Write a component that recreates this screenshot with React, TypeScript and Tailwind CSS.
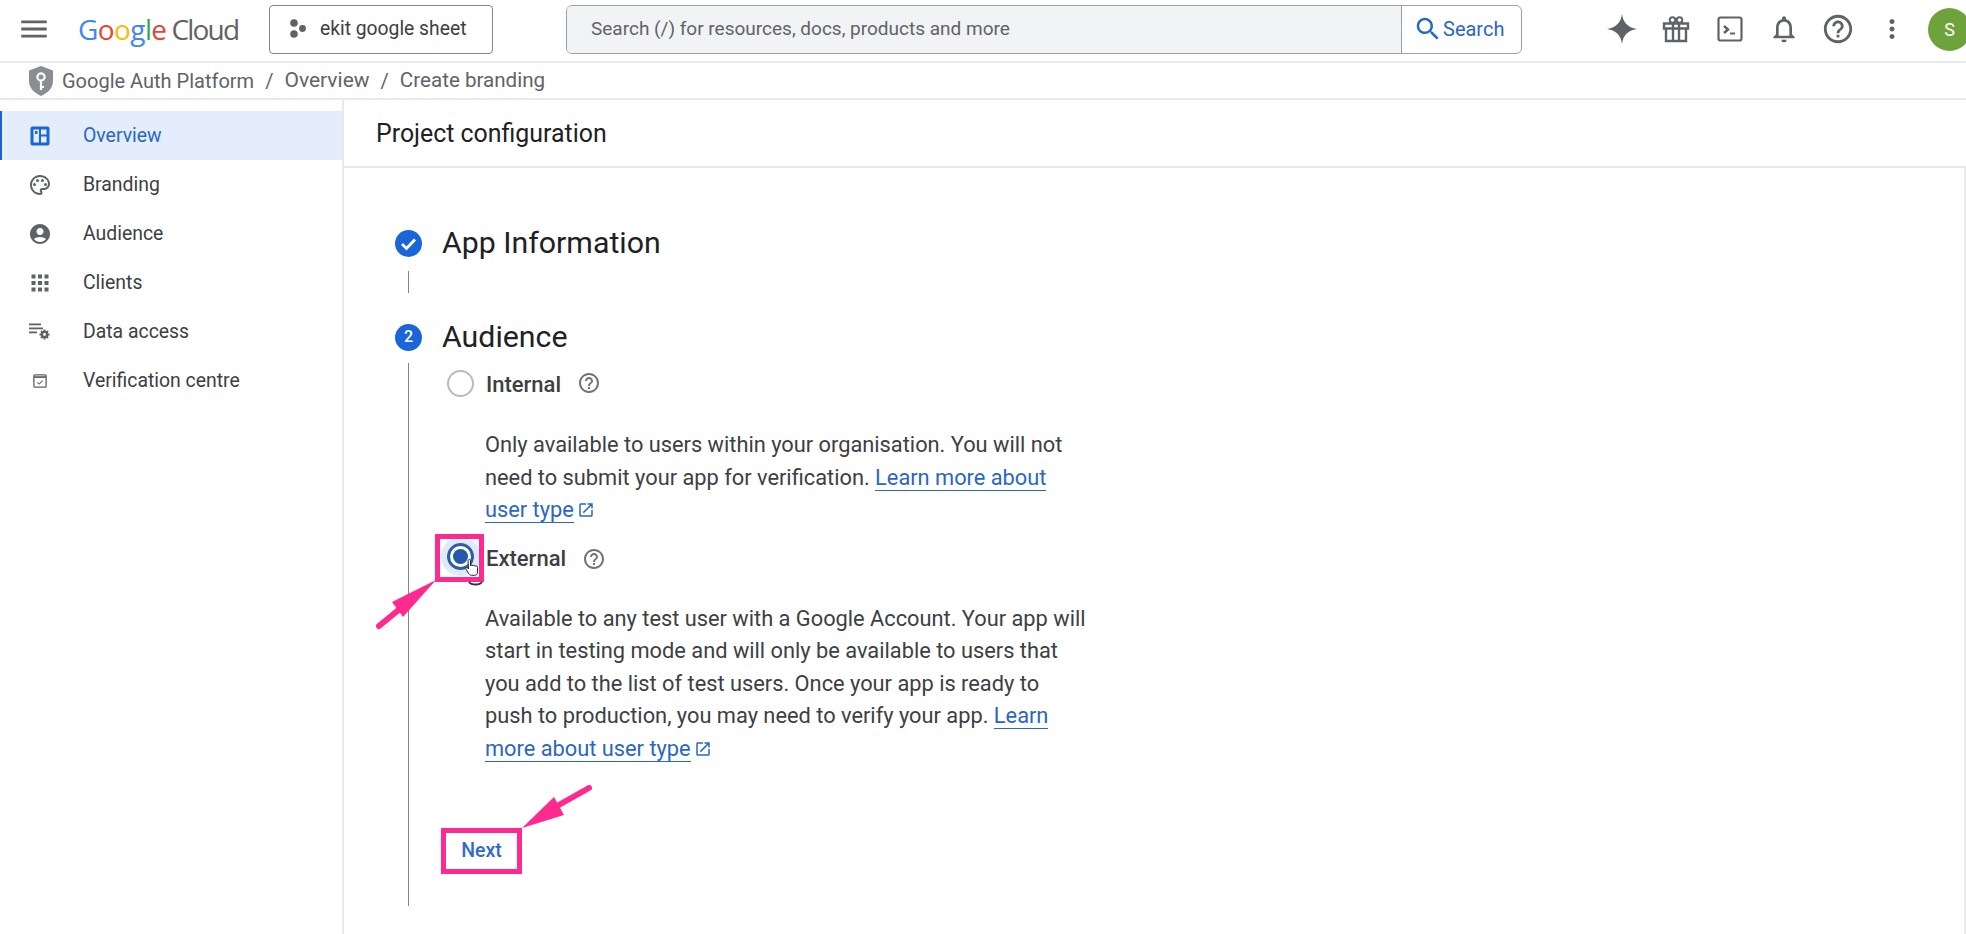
import React from "react";

const P = ({ d, className }: { d: string; className?: string }) => (
  <svg viewBox="0 0 24 24" fill="currentColor" className={className}>
    <path d={d} />
  </svg>
);

const HELP =
  "M11 18h2v-2h-2v2zm1-16C6.48 2 2 6.48 2 12s4.48 10 10 10 10-4.48 10-10S17.52 2 12 2zm0 18c-4.41 0-8-3.59-8-8s3.59-8 8-8 8 3.59 8 8-3.59 8-8 8zm0-14c-2.21 0-4 1.79-4 4h2c0-1.1.9-2 2-2s2 .9 2 2c0 2-3 1.75-3 5h2c0-2.25 3-2.5 3-5 0-2.21-1.79-4-4-4z";
const OPEN =
  "M19 19H5V5h7V3H5c-1.11 0-2 .9-2 2v14c0 1.1.89 2 2 2h14c1.1 0 2-.9 2-2v-7h-2v7zM14 3v2h3.59l-9.83 9.83 1.41 1.41L19 6.41V10h2V3h-7z";

const TopIcon = ({ children }: { children: React.ReactNode }) => (
  <div className="w-[54px] h-[54px] shrink-0 flex items-center justify-center text-[#5f6368]">{children}</div>
);

const OverviewIcon = () => (
  <svg viewBox="0 0 20 20" className="w-5 h-5">
    <rect x="0.5" y="0.5" width="19" height="19" rx="2" fill="#1b66d2" />
    <rect x="3.5" y="3.5" width="5.5" height="13" fill="#e3edfc" />
    <rect x="11" y="3.5" width="5.5" height="5" fill="#e3edfc" />
    <rect x="11" y="10.5" width="5.5" height="6" fill="#e3edfc" />
    <rect x="5" y="5" width="2.5" height="3" fill="#1b66d2" />
  </svg>
);

const PaletteIcon = () => (
  <svg viewBox="0 0 24 24" fill="currentColor" className="w-6 h-6">
    <path d="M12 22C6.49 22 2 17.51 2 12S6.49 2 12 2s10 4.04 10 9c0 3.31-2.69 6-6 6h-1.77c-.28 0-.5.22-.5.5 0 .12.05.23.13.33.41.47.64 1.06.64 1.67A2.5 2.5 0 0 1 12 22zm0-18c-4.41 0-8 3.59-8 8s3.59 8 8 8c.28 0 .5-.22.5-.5a.54.54 0 0 0-.14-.35c-.41-.46-.63-1.05-.63-1.65a2.5 2.5 0 0 1 2.5-2.5H16c2.21 0 4-1.79 4-4 0-3.86-3.59-7-8-7z" />
    <circle cx="6.5" cy="11.5" r="1.5" />
    <circle cx="9.5" cy="7.5" r="1.5" />
    <circle cx="14.5" cy="7.5" r="1.5" />
    <circle cx="17.5" cy="11.5" r="1.5" />
  </svg>
);

const GridIcon = () => (
  <svg viewBox="0 0 18 18" fill="currentColor" className="w-[18px] h-[18px]">
    {[0, 6.5, 13].map((y) =>
      [0, 6.5, 13].map((x) => <rect key={`${x}-${y}`} x={x + 0.5} y={y + 0.5} width="4" height="4" />)
    )}
  </svg>
);

const DataIcon = () => (
  <svg viewBox="0 0 22 18" fill="currentColor" className="w-[22px] h-[18px]">
    <rect x="0" y="0.5" width="12" height="1.8" />
    <rect x="0" y="4.5" width="14" height="1.8" />
    <rect x="0" y="8.5" width="8" height="1.8" />
    <circle cx="15.5" cy="11.5" r="2.6" fill="none" stroke="currentColor" strokeWidth="2.4" />
    <path
      d="M15.5 6.5v2.500M15.500 14v2.500M10.500 11.500h2.500M18 11.500h2.500M12 8l1.800 1.800M17.200 13.200l1.800 1.800M19 8l-1.800 1.800M13.800 13.200l-1.800 1.800"
      stroke="currentColor"
      strokeWidth="2"
    />
  </svg>
);

const VerifyIcon = () => (
  <svg viewBox="0 0 16 16" fill="none" stroke="currentColor" className="w-[14px] h-[14px]">
    <rect x="1" y="1" width="14" height="14" rx="1" strokeWidth="1.5" />
    <path d="M1 3.5h14" strokeWidth="2" />
    <path d="M5 9.5l2 2 4-4" strokeWidth="1.2" />
  </svg>
);

const Side = ({ icon, label, active }: { icon: React.ReactNode; label: string; active?: boolean }) => (
  <div
    className={`h-[49px] flex items-center text-[19.4px] ${
      active ? "bg-[#e3edfc] text-[#2a66c4] border-l-2 border-[#1b62cc]" : "text-[#3c4043] pl-[2px]"
    }`}
  >
    <div className={`w-[38px] ml-[19px] flex justify-center ${active ? "" : "text-[#5f6368]"}`}>{icon}</div>
    <span className="ml-[24px]">{label}</span>
  </div>
);

const Link = ({ children }: { children: React.ReactNode }) => (
  <span className="text-[#2a66c4] border-b border-[#2a66c4]">{children}</span>
);

const OpenIcon = () => <P d={OPEN} className="inline-block w-[18px] h-[18px] ml-[3px] align-[-2px] text-[#2a66c4]" />;

export default function App() {
  return (
    <div className="relative w-[1966px] h-[934px] overflow-hidden bg-white font-['Roboto','Liberation_Sans',sans-serif] text-[#202124]">
      {/* Top bar */}
      <header className="h-[63px] pb-[3px] flex items-center border-b-2 border-[#e8e9eb]">
        <P
          d="M3 18h18v-2H3v2zm0-5h18v-2H3v2zm0-7v2h18V6H3z"
          className="w-[34px] h-[34px] shrink-0 ml-[17px] text-[#5f6368]"
        />
        <div className="ml-[27px] w-[161px] shrink-0 flex items-baseline text-[28px] font-['Open_Sans',sans-serif] leading-none">
          <span className="tracking-[-0.6px]">
            <span className="text-[#4285f4]">G</span>
            <span className="text-[#ea4335]">o</span>
            <span className="text-[#fbbc05]">o</span>
            <span className="text-[#4285f4]">g</span>
            <span className="text-[#34a853]">l</span>
            <span className="text-[#ea4335]">e</span>
          </span>
          <span className="ml-[5px] text-[#5f6368] tracking-[-1.8px]">Cloud</span>
        </div>
        <div className="ml-[30px] w-[224px] shrink-0 h-[49px] rounded border border-[#80868b] flex items-center pl-[19px] text-[19.3px] text-[#3c4043]">
          <svg viewBox="0 0 18 20" fill="#5f6368" className="w-[18px] h-[20px]">
            <circle cx="5" cy="4" r="3.8" />
            <circle cx="5" cy="15" r="3.8" />
            <circle cx="13.5" cy="9.5" r="3.4" />
          </svg>
          <span className="ml-[13px]">ekit google sheet</span>
        </div>
        <div className="ml-[73px] w-[956px] shrink-0 h-[49px] rounded-md border border-[#9aa0a6] flex overflow-hidden">
          <div className="w-[835px] bg-[#f1f3f4] border-r border-[#9aa0a6] flex items-center pl-[24px] text-[19px] text-[#5f6368]">
            Search (/) for resources, docs, products and more
          </div>
          <div className="flex-1 flex items-center pl-[14px] text-[#2a66c4] text-[20px]">
            <P
              d="M15.5 14h-.79l-.28-.27C15.41 12.59 16 11.11 16 9.5 16 5.91 13.09 3 9.5 3S3 5.91 3 9.5 5.91 16 9.5 16c1.61 0 3.09-.59 4.23-1.57l.27.28v.79l5 4.99L20.49 19l-4.99-5zm-6 0C7.01 14 5 11.99 5 9.5S7.01 5 9.5 5 14 7.01 14 9.5 11.99 14 9.5 14z"
              className="w-[30px] h-[30px] -ml-[3px]"
            />
            <span>Search</span>
          </div>
        </div>
        <div className="ml-[73px] shrink-0 flex items-center">
          <TopIcon>
            <svg viewBox="0 0 32 32" fill="currentColor" className="w-[32px] h-[32px]">
              <path d="M16 1c1.2 8.6 5.4 13.4 15 15-9.6 1.6-13.8 6.4-15 15-1.2-8.6-5.4-13.4-15-15C10.600 14.400 14.800 9.600 16 1z" />
            </svg>
          </TopIcon>
          <TopIcon>
            <svg viewBox="0 0 28 28" fill="none" stroke="currentColor" strokeWidth="2.400" className="w-[28px] h-[28px]">
              <path d="M2 8.500h24v5H2zM4 13.500h20V26H4zM11 8.500V26M17 8.500V26" />
              <circle cx="10.500" cy="5" r="2.800" strokeWidth="2" />
              <circle cx="17.500" cy="5" r="2.800" strokeWidth="2" />
            </svg>
          </TopIcon>
          <TopIcon>
            <svg viewBox="0 0 26 26" fill="none" stroke="currentColor" strokeWidth="2.200" className="w-[26px] h-[26px]">
              <rect x="1.500" y="1.500" width="23" height="23" rx="2" />
              <path d="M7 10l4 3.500-4 3.500" strokeWidth="2.400" />
              <path d="M13 17.500h5" strokeWidth="2" />
            </svg>
          </TopIcon>
          <TopIcon>
            <P
              d="M12 22c1.100 0 2-.9 2-2h-4c0 1.100.9 2 2 2zm6-6v-5c0-3.070-1.630-5.640-4.500-6.320V4c0-.83-.67-1.500-1.500-1.500s-1.500.67-1.500 1.500v.68C7.640 5.360 6 7.920 6 11v5l-2 2v1h16v-1l-2-2zm-2 1H8v-6c0-2.480 1.510-4.500 4-4.500s4 2.020 4 4.500v6z"
              className="w-[32px] h-[32px]"
            />
          </TopIcon>
          <TopIcon>
            <P d={HELP} className="w-[34px] h-[34px]" />
          </TopIcon>
          <TopIcon>
            <P
              d="M12 8c1.100 0 2-.9 2-2s-.9-2-2-2-2 .9-2 2 .9 2 2 2zm0 2c-1.100 0-2 .9-2 2s.9 2 2 2 2-.9 2-2-.9-2-2-2zm0 6c-1.100 0-2 .9-2 2s.9 2 2 2 2-.9 2-2-.9-2-2-2z"
              className="w-[30px] h-[30px]"
            />
          </TopIcon>
          <div className="ml-[9px] w-[43px] h-[43px] rounded-full bg-[#6ea33c] text-white flex items-center justify-center text-[18px] shrink-0">
            S
          </div>
        </div>
      </header>

      {/* Breadcrumb */}
      <div className="h-[37px] flex items-center border-b-2 border-[#e8e9eb] pl-[28px] text-[20px] text-[#5f6368]">
        <svg viewBox="0 0 26 30" className="w-[26px] h-[30px] shrink-0">
          <path d="M13 0l12 4.500v10c0 7.500-5 12.500-12 15.500C6 27 1 22 1 14.500v-10z" fill="#8a8d91" />
          <circle cx="13" cy="11" r="3.600" fill="none" stroke="#fff" strokeWidth="2.200" />
          <path d="M13 14.500V24M13 21h3" stroke="#fff" strokeWidth="2.200" fill="none" />
        </svg>
        <span className="ml-[8px]">Google Auth Platform</span>
        <span className="mx-[11px]">/</span>
        <span className="text-[21px]">Overview</span>
        <span className="mx-[11px]">/</span>
        <span className="text-[20.6px]">Create branding</span>
      </div>

      <div className="flex h-[834px]">
        {/* Sidebar */}
        <aside className="w-[344px] shrink-0 border-r-2 border-[#e8e9eb] pt-[11px]">
          <Side active icon={<OverviewIcon />} label="Overview" />
          <Side icon={<PaletteIcon />} label="Branding" />
          <Side
            icon={
              <P
                d="M12 2C6.480 2 2 6.480 2 12s4.480 10 10 10 10-4.480 10-10S17.520 2 12 2zm0 4c1.930 0 3.500 1.570 3.500 3.500S13.930 13 12 13s-3.500-1.570-3.500-3.500S10.070 6 12 6zm0 14c-2.030 0-4.430-.82-6.140-2.880a9.947 9.947 0 0 1 12.280 0C16.430 19.180 14.030 20 12 20z"
                className="w-6 h-6"
              />
            }
            label="Audience"
          />
          <Side icon={<GridIcon />} label="Clients" />
          <Side icon={<DataIcon />} label="Data access" />
          <Side icon={<VerifyIcon />} label="Verification centre" />
        </aside>

        {/* Main */}
        <main className="flex-1 min-w-0">
          <div className="h-[68px] pt-[2px] flex items-center border-b-2 border-[#e8e9eb] pl-[32px] text-[24.9px]">
            Project configuration
          </div>
          <div className="relative h-[766px] border-r-2 border-[#eceded] pl-[51px] pt-[57px]">
            {/* Step 1 */}
            <div className="flex items-center h-[36px]">
              <svg viewBox="0 0 27 27" className="w-[27px] h-[27px]">
                <circle cx="13.500" cy="13.500" r="13.500" fill="#1a66d9" />
                <path d="M7 14l4.500 4.500L20 9.500" fill="none" stroke="#fff" strokeWidth="2.800" />
              </svg>
              <h2 className="ml-[20px] text-[30.3px] font-normal">App Information</h2>
            </div>
            <div className="ml-[13px] mt-[10px] w-px h-[22px] bg-[#80868b]" />
            {/* Step 2 */}
            <div className="mt-[26px] flex items-center h-[36px]">
              <div className="w-[27px] h-[27px] rounded-full bg-[#1a66d9] text-white text-[16px] font-medium flex items-center justify-center">
                2
              </div>
              <h2 className="ml-[20px] text-[30.3px] font-normal">Audience</h2>
            </div>
            <div className="ml-[13px] mt-[8px] border-l border-[#80868b] h-[543px] pl-[38px] pt-[2px] relative w-[800px]">
              <div className="flex items-center h-[36px]">
                <div className="w-[27px] h-[27px] rounded-full border-2 border-[#b8babc]" />
                <span className="ml-[12px] pt-[2px] text-[22px] font-medium text-[#3c4043]">Internal</span>
                <P d={HELP} className="ml-[16px] w-[24px] h-[24px] text-[#6f7377]" />
              </div>
              <p className="mt-[28px] ml-[38px] text-[21.8px] leading-[32.5px] text-[#3c4043] whitespace-nowrap">
                Only available to users within your organisation. You will not
                <br />
                need to submit your app for verification. <Link>Learn more about</Link>
                <br />
                <Link>user type</Link>
                <OpenIcon />
              </p>
              <div className="mt-[14px] flex items-center h-[36px]">
                <div className="mb-[4px] w-[27px] h-[27px] rounded-full border-[3px] border-[#2f5da8] flex items-center justify-center shadow-[0_0_0_6px_#dfe9f7]">
                  <div className="w-[15px] h-[15px] rounded-full bg-[#2358aa]" />
                </div>
                <span className="ml-[12px] text-[22px] font-medium text-[#3c4043]">External</span>
                <P d={HELP} className="ml-[16px] w-[24px] h-[24px] text-[#6f7377]" />
              </div>
              <p className="mt-[26px] ml-[38px] text-[21.8px] leading-[32.5px] text-[#3c4043] whitespace-nowrap">
                Available to any test user with a Google Account. Your app will
                <br />
                start in testing mode and will only be available to users that
                <br />
                you add to the list of test users. Once your app is ready to
                <br />
                push to production, you may need to verify your app. <Link>Learn</Link>
                <br />
                <Link>more about user type</Link>
                <OpenIcon />
              </p>
              <button className="mt-[63px] ml-[-6px] w-[81px] h-[46px] border-[5px] border-[#ff2a8f] text-[#2f6ac6] text-[19.5px] font-medium flex items-center justify-center">
                Next
              </button>
            </div>
          </div>
        </main>
      </div>

      {/* Annotations */}
      <div className="absolute left-[435px] top-[534px] w-[49px] h-[48px] border-[5px] border-[#ff2a8f] pointer-events-none" />
      <svg viewBox="0 0 1966 934" className="absolute inset-0 w-[1966px] h-[934px] pointer-events-none">
        <path d="M379 626l22-18" stroke="#ff2a8f" strokeWidth="6" strokeLinecap="round" fill="none" />
        <path d="M436 580l-44 22 11 15z" fill="#ff2a8f" />
        <path d="M589 788l-32 18" stroke="#ff2a8f" strokeWidth="6" strokeLinecap="round" fill="none" />
        <path d="M522 828l32-31 10 18z" fill="#ff2a8f" />
        <path d="M469 582a7 4 0 0 0 13 0" fill="none" stroke="#333" strokeWidth="2" />
        <path
          d="M468 561c0-2 2.500-2 2.500 0v5c.5-1.500 2.500-1.500 2.500 0 .5-1 2.300-1 2.300.5.5-1 2.200-.8 2.200.8v5c0 2-1 3-3 3h-3c-1.500 0-2-.8-3-2l-2.500-4c-1-1.500 1-2.500 2-1l.5.7z"
          fill="#fff"
          stroke="#222"
          strokeWidth="1"
        />
      </svg>
    </div>
  );
}
